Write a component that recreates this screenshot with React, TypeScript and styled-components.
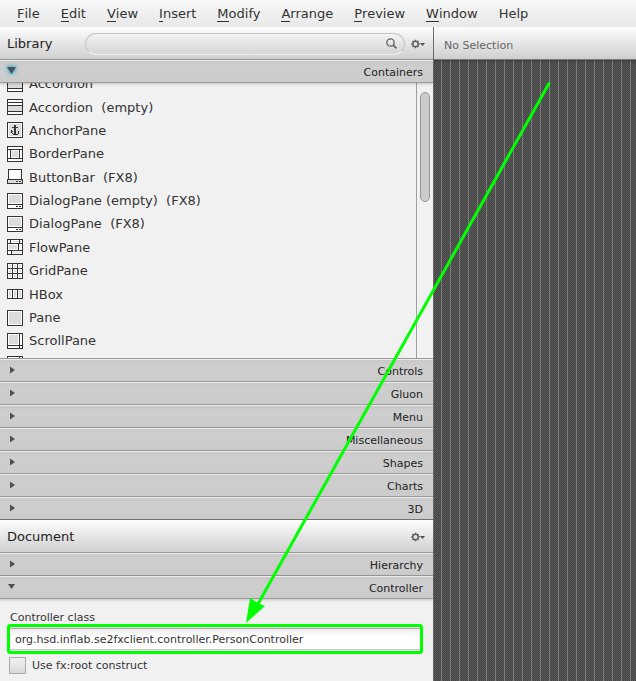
import React from "react";
import styled, { createGlobalStyle, css } from "styled-components";

const GlobalStyle = createGlobalStyle`
  * { box-sizing: border-box; }
  body { margin: 0; font-family: "DejaVu Sans", sans-serif; font-size: 13px; color: #333; background: #f1f1f1; }
  button, input { font: inherit; color: inherit; margin: 0; }
  button { border: 0; background: none; padding: 0; }
`;

const Window = styled.div`
  position: relative;
  display: flex;
  flex-direction: column;
  height: 100vh;
  overflow: hidden;
`;

const MenuBar = styled.nav`
  display: flex;
  flex: none;
  gap: 21px;
  height: 27px;
  padding: 0 17px;
  background: linear-gradient(#f7f7f7, #e8e8e8);
`;

const MenuItem = styled.button`
  line-height: 27px;
  white-space: nowrap;
`;

const Mnemonic = styled.span`
  display: inline-block;
  height: 17px;
  line-height: 17px;
  border-bottom: 1px solid #333;
`;

const Workspace = styled.div`
  flex: 1;
  min-height: 0;
  display: grid;
  grid-template-columns: 434fr 202fr;
`;

const Sidebar = styled.div`
  display: flex;
  flex-direction: column;
  min-width: 0;
  min-height: 0;
  background: #f1f1f1;
  border-right: 1px solid #6a6a6a;
`;

const headerSurface = css`
  display: flex;
  flex: none;
  align-items: center;
  height: 33px;
  background: linear-gradient(#fdfdfd, #cfcfcf);
`;

const PanelHeader = styled.header`
  ${headerSurface}
  justify-content: space-between;
  padding: 1px 8px 0 7px;
  border-bottom: 1px solid #999;
`;

const PanelTitle = styled.h2`
  margin: 0;
  font-size: 13px;
  font-weight: normal;
  color: #222;
`;

const SearchField = styled.label`
  display: flex;
  align-items: center;
  flex: 1;
  height: 22px;
  margin: 0 6px 0 33px;
  padding: 0 7px 0 12px;
  border: 1px solid #c4c4c4;
  border-bottom-color: #f0f0f0;
  border-radius: 11px;
`;

const SearchInput = styled.input`
  flex: 1;
  min-width: 0;
  border: 0;
  outline: 0;
  background: transparent;
`;

const GearButton = styled.button`
  display: flex;
`;

const Section = styled.button<{ $last?: boolean }>`
  display: flex;
  flex: none;
  align-items: center;
  justify-content: space-between;
  height: 23px;
  padding: 2px 10px 0 7px;
  font-size: 11px;
  color: #222;
  background: linear-gradient(#c9c9c9, #cecece 30%, #cbcbcb);
  border-top: 1px solid #ececec;
  border-bottom: 1px solid ${(p) => (p.$last ? "#707070" : "#999")};
`;

const OpenSection = styled(Section)`
  position: relative;
  box-shadow: 0 1px 3px #0003;
`;

const ListArea = styled.div`
  display: flex;
  flex: 1;
  min-height: 0;
  overflow: hidden;
  border-bottom: 1px solid #999;
`;

const List = styled.ul`
  flex: 1;
  display: grid;
  grid-auto-rows: 1fr;
  height: 304px;
  margin: -11px 0 0;
  padding: 0 7px;
  list-style: none;
`;

const ListRow = styled.li`
  display: flex;
  align-items: center;
  gap: 6px;
  white-space: pre;
`;

const ScrollTrack = styled.div`
  width: 17px;
  padding: 9px 3px;
  border-left: 1px solid #a0a0a0;
`;

const ScrollThumb = styled.div`
  width: 10px;
  height: 110px;
  background: #cbcbcb;
  border: 1px solid #999;
  border-radius: 5px;
`;

const Form = styled.form`
  flex: none;
  display: flex;
  flex-direction: column;
  height: 82px;
  padding: 12px 10px 0 7px;
  font-size: 11px;
`;

const FieldLabel = styled.label`
  height: 13px;
  line-height: 13px;
  padding-left: 3px;
`;

const FieldHighlight = styled.div`
  display: flex;
  height: 30px;
  padding: 1px 0;
  border: 3px solid #00ff00;
  border-radius: 3px;
`;

const TextInput = styled.input`
  flex: 1;
  min-width: 0;
  padding: 1px 5px 0;
  border: 1px solid #aaa;
  border-width: 1px 0;
  border-bottom-color: #ccc;
  outline: 0;
  background: linear-gradient(#eee, #fff 8px);
`;

const CheckRow = styled.label`
  display: flex;
  align-items: center;
  gap: 6px;
  margin: 3px 2px 0;
`;

const CheckBox = styled.input`
  appearance: none;
  width: 17px;
  height: 17px;
  border: 1px solid #aaa;
  background: linear-gradient(#f2f2f2, #d9d9d9);
`;

const Content = styled.main`
  display: flex;
  flex-direction: column;
  min-width: 0;
`;

const SelectionBar = styled.div`
  ${headerSurface}
  padding: 4px 10px 0;
  font-size: 11px;
  color: #666;
  border-bottom: 1px solid #777;
`;

const Canvas = styled.div`
  flex: 1;
  background:
    linear-gradient(#0003, transparent 4px),
    repeating-linear-gradient(90deg, transparent 0 7px, #7c7c7c 7px 8px, transparent 8px 9px),
    repeating-conic-gradient(#444 0 25%, #5a5a5a 0 50%) 0 0 / 2px 2px;
`;

const Annotation = styled.svg`
  position: absolute;
  inset: 0;
  pointer-events: none;
`;

type IconName =
  | "accordion" | "anchor" | "border" | "buttonBar" | "dialog" | "flow"
  | "grid" | "hbox" | "pane" | "scroll" | "split";

const ink = "#333";
const fill = "#dcdcdc";

const drawings: Record<IconName, React.ReactNode> = {
  accordion: (<><path fill={fill} d="M1 7h14v5H1z" /><path fill={ink} d="M1 3h14v1H1zM1 6h14v1H1zM1 12h14v1H1z" /></>),
  anchor: (<><path fill={fill} d="M2 2h12v12H2z" /><path fill={ink} d="M7 3h2v2h2v1H9v6h1l1-1v-1h-1l2-2v3l-2 2H6l-2-2V8l2 2H5v1l1 1h1V6H5V5h2z" /></>),
  border: (<><path fill={fill} d="M5 5h6v6H5z" /><path fill={ink} d="M1 3h14v1H1zM1 12h14v1H1zM3 4h1v8H3zM12 4h1v8h-1z" /></>),
  buttonBar: null,
  dialog: (<><path fill={fill} d="M2 2h12v8H2z" /><path fill={ink} d="M1 11h14v1H1zM9 13h2v1H9zM12 13h2v1h-2z" /></>),
  flow: (<><path fill={fill} d="M5 2h9v1H5zM2 6h8v4H2zM5 13h9v1H5z" /><path fill={ink} d="M1 4h14v1H1zM1 11h14v1H1zM3 1h1v3H3zM12 1h1v3h-1zM11 5h1v6h-1zM4 12h1v3H4z" /></>),
  grid: (<><path fill={fill} d="M2 2h2v2H2zM7 2h2v2H7zM12 2h2v2h-2zM2 7h2v2H2zM7 7h2v2H7zM12 7h2v2h-2zM2 12h2v2H2zM7 12h2v2H7zM12 12h2v2h-2z" /><path fill={ink} d="M5 1h1v14H5zM10 1h1v14h-1zM1 5h14v1H1zM1 10h14v1H1z" /></>),
  hbox: null,
  pane: <path fill={fill} d="M2 2h12v12H2z" />,
  scroll: (<><path fill={fill} d="M2 2h9v9H2z" /><path fill={ink} d="M12 1h1v14h-1zM1 12h14v1H1z" /></>),
  split: <path fill={ink} d="M12 1h1v14h-1z" />,
};

const PaneIcon = ({ name }: { name: IconName }) => (
  <svg width="16" height="16" viewBox="0 0 16 16" shapeRendering="crispEdges" aria-hidden="true">
    {name === "buttonBar" ? (
      <>
        <path fill="#fff" stroke={ink} d="M1.5 .5h13v10h-13z" />
        <path fill={fill} stroke={ink} d="M.5 10.5h15v4H.5z" />
        <path fill={ink} d="M9 12h2v1H9zM12 12h2v1h-2z" />
      </>
    ) : name === "hbox" ? (
      <>
        <path fill="#fff" stroke={ink} d="M.5 3.5h15v9H.5z" />
        <path fill={fill} d="M2 5h2v6H2zM7 5h2v6H7zM12 5h2v6h-2z" />
        <path fill={ink} d="M5 4h1v8H5zM10 4h1v8h-1z" />
      </>
    ) : (
      <>
        <path fill="#fff" stroke={ink} d="M.5.5h15v15H.5z" />
        {drawings[name]}
      </>
    )}
  </svg>
);

const TriangleSvg = styled.svg<{ $glow?: boolean }>`
  margin-top: -3px;
  overflow: visible;
  filter: ${(p) => (p.$glow ? "drop-shadow(0 0 2px #19a5d8) drop-shadow(0 0 1px #5cc4e8)" : "none")};
`;

const Triangle = ({ open, glow }: { open?: boolean; glow?: boolean }) => (
  <TriangleSvg $glow={glow} width="9" height="8" viewBox="0 0 9 8" aria-hidden="true">
    <path fill="#505050" d={glow ? "M0 0h9L4.500 7z" : open ? "M1 1h7L4.500 6z" : "M3 0.500v7L8 4z"} />
  </TriangleSvg>
);

const Gear = ({ label }: { label: string }) => (
  <GearButton type="button" aria-label={label}>
    <svg width="14" height="10" viewBox="0 0 14 10" fill="none">
      <circle cx="4.500" cy="5" r="2.700" stroke="#606060" strokeWidth="1.500" />
      <path stroke="#606060" strokeWidth="1.300" d="M4.500 .7v1.200M4.500 8.100v1.200M.2 5h1.200M7.600 5h1.200M1.500 2l.8.8M6.700 7.200l.8.8M1.500 8l.8-.8M6.700 2.800l.8-.8" />
      <path fill="#505050" d="M9 4h5l-2.500 3z" />
    </svg>
  </GearButton>
);

const menus = ["File", "Edit", "View", "Insert", "Modify", "Arrange", "Preview", "Window"];

const containers: [IconName, string][] = [
  ["accordion", "Accordion"],
  ["accordion", "Accordion  (empty)"],
  ["anchor", "AnchorPane"],
  ["border", "BorderPane"],
  ["buttonBar", "ButtonBar  (FX8)"],
  ["dialog", "DialogPane (empty)  (FX8)"],
  ["dialog", "DialogPane  (FX8)"],
  ["flow", "FlowPane"],
  ["grid", "GridPane"],
  ["hbox", "HBox"],
  ["pane", "Pane"],
  ["scroll", "ScrollPane"],
  ["split", ""],
];

const closedSections = ["Controls", "Gluon", "Menu", "Miscellaneous", "Shapes", "Charts", "3D"];

export default function App() {
  return (
    <>
      <GlobalStyle />
      <Window>
        <MenuBar>
          {menus.map((m) => (
            <MenuItem key={m} type="button"><Mnemonic>{m[0]}</Mnemonic>{m.slice(1)}</MenuItem>
          ))}
          <MenuItem type="button">Help</MenuItem>
        </MenuBar>
        <Workspace>
          <Sidebar>
            <PanelHeader>
              <PanelTitle>Library</PanelTitle>
              <SearchField>
                <SearchInput type="text" aria-label="Search library" />
                <svg width="11" height="11" viewBox="0 0 11 11" fill="none" stroke="#606060" aria-hidden="true">
                  <circle cx="4.500" cy="4.500" r="3.700" strokeWidth="1.300" />
                  <path strokeWidth="1.700" d="M7.200 7.200l3.200 3.200" />
                </svg>
              </SearchField>
              <Gear label="Library options" />
            </PanelHeader>
            <OpenSection type="button"><Triangle open glow />Containers</OpenSection>
            <ListArea>
              <List>
                {containers.map(([icon, name]) => (
                  <ListRow key={name}><PaneIcon name={icon} />{name}</ListRow>
                ))}
              </List>
              <ScrollTrack><ScrollThumb /></ScrollTrack>
            </ListArea>
            {closedSections.map((s, i) => (
              <Section key={s} type="button" $last={i === closedSections.length - 1}><Triangle />{s}</Section>
            ))}
            <PanelHeader>
              <PanelTitle>Document</PanelTitle>
              <Gear label="Document options" />
            </PanelHeader>
            <Section type="button"><Triangle />Hierarchy</Section>
            <OpenSection type="button"><Triangle open />Controller</OpenSection>
            <Form>
              <FieldLabel htmlFor="controller-class">Controller class</FieldLabel>
              <FieldHighlight>
                <TextInput id="controller-class" type="text" defaultValue="org.hsd.inflab.se2fxclient.controller.PersonController" />
              </FieldHighlight>
              <CheckRow><CheckBox type="checkbox" />Use fx:root construct</CheckRow>
            </Form>
          </Sidebar>
          <Content>
            <SelectionBar>No Selection</SelectionBar>
            <Canvas />
          </Content>
        </Workspace>
        <Annotation width="100%" height="100%" viewBox="0 0 636 681" preserveAspectRatio="none" aria-hidden="true">
          <path stroke="#00ff00" strokeWidth="3" d="M549.500 82.500L258 604" />
          <path fill="#00ff00" d="M246 623L250 598L258 603L265 606z" />
        </Annotation>
      </Window>
    </>
  );
}
